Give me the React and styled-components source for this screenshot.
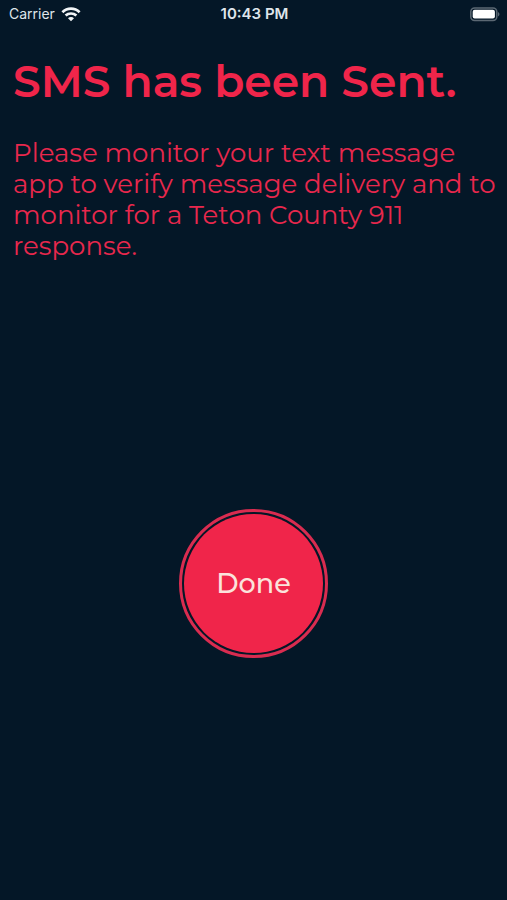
import React from 'react';
import styled, { createGlobalStyle } from 'styled-components';

const GlobalStyle = createGlobalStyle`
  body {
    margin: 0;
    background: #041727;
  }
`;

const Screen = styled.div`
  display: flex;
  flex-direction: column;
  min-height: 100vh;
  background: #041727;
  color: #f0254a;
  font-family: Montserrat, Inter, sans-serif;
`;

const StatusBar = styled.header`
  display: grid;
  grid-template-columns: 1fr auto 1fr;
  align-items: center;
  height: 28px;
  padding: 0 7px 0 9px;
  color: #dfe5ea;
  font-family: Inter, sans-serif;
  line-height: 20px;
`;

const Network = styled.div`
  display: flex;
  align-items: center;
  gap: 6px;
  font-size: 14px;
`;

const Time = styled.time`
  font-size: 15px;
  font-weight: 600;
`;

const Battery = styled.svg`
  justify-self: end;
`;

const Message = styled.main`
  padding: 27px 6px 0 13px;
`;

const Headline = styled.h1`
  margin: 0;
  font-size: 44px;
  font-weight: 600;
  line-height: 52px;
`;

const Teaser = styled.p`
  margin: 31px 0 0;
  color: #e8284d;
  font-size: 26px;
  font-weight: 400;
  line-height: 31px;
`;

const Actions = styled.div`
  display: flex;
  flex: 1;
  align-items: center;
  justify-content: center;
  padding: 24px 0 20px;
`;

const DoneButton = styled.button`
  width: 149px;
  height: 149px;
  padding: 2px;
  border: 3px solid #d92c50;
  border-radius: 50%;
  background: #f0254a content-box;
  color: #fbe3dc;
  font-family: inherit;
  font-size: 27px;
  font-weight: 500;
  line-height: 31px;
  cursor: pointer;
`;

const WifiIcon = () => (
  <svg width="20" height="15" viewBox="0 0 20 15" aria-hidden="true">
    <g fill="none" stroke="#f2f5f7" strokeWidth="2.7">
      <path d="M1.4 5.2C6.2 0.5 13.8 0.5 18.6 5.2" />
      <path d="M4.6 8.6C7.6 5.8 12.4 5.8 15.4 8.6" />
    </g>
    <path d="M10 14.3L7 11.2C8.6 9.7 11.4 9.7 13 11.2Z" fill="#f2f5f7" />
  </svg>
);

const BatteryIcon = () => (
  <Battery width="30" height="15" viewBox="0 0 30 15" role="img" aria-label="Battery">
    <rect x="0.8" y="0.9" width="26" height="12.6" rx="3.8" fill="none" stroke="#5b6873" strokeWidth="1.5" />
    <rect x="2.7" y="2.8" width="22.2" height="8.8" rx="2" fill="#fff" />
    <path d="M28 5C30 5.8 30 8.6 28 9.4Z" fill="#5b6873" />
  </Battery>
);

class App extends React.Component {
  render() {
    return (
      <React.Fragment>
        <GlobalStyle />
        <Screen>
          <StatusBar>
            <Network>
              <span>Carrier</span>
              <WifiIcon />
            </Network>
            <Time>10:43 PM</Time>
            <BatteryIcon />
          </StatusBar>
          <Message>
            <Headline>SMS has been Sent.</Headline>
            <Teaser>
              Please monitor your text message app to verify message delivery
              and to monitor for a Teton County 911 response.
            </Teaser>
          </Message>
          <Actions>
            <DoneButton type="button">Done</DoneButton>
          </Actions>
        </Screen>
      </React.Fragment>
    );
  }
}

export default App;
